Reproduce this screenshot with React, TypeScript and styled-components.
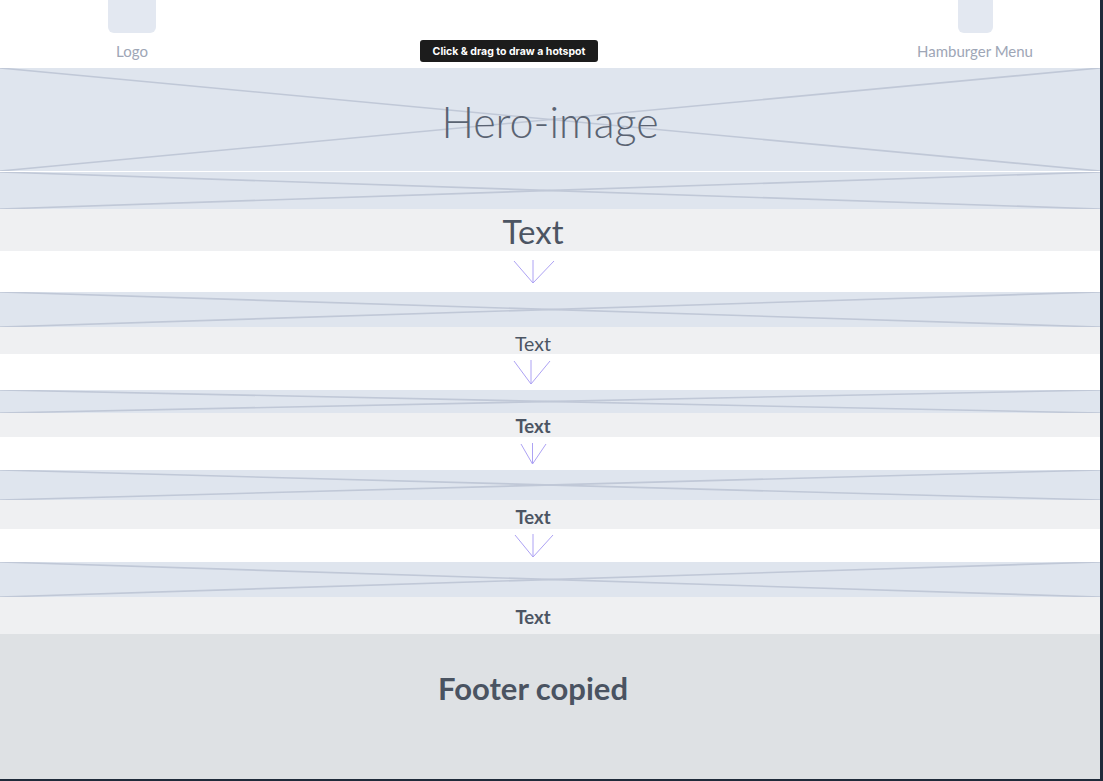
import styled, { createGlobalStyle } from "styled-components";

const GlobalStyle = createGlobalStyle`
  html, body {
    margin: 0;
    padding: 0;
    background: #ffffff;
  }
  body {
    font-family: Lato, "Open Sans", "Liberation Sans", sans-serif;
  }
`;

const Page = styled.div`
  position: relative;
  width: 1100px;
  height: 779px;
  border-right: 3px solid #1f2b3a;
  border-bottom: 2px solid #1f2b3a;
  background: #ffffff;
  display: flex;
  flex-direction: column;
  overflow: hidden;
`;

const Header = styled.header`
  height: 68px;
  display: flex;
  justify-content: space-between;
  padding: 0 55px 0 82px;
`;

const NavItem = styled.div<{ w: number }>`
  width: ${(p) => p.w}px;
  display: flex;
  flex-direction: column;
  align-items: center;
`;

const NavBox = styled.div<{ w: number }>`
  width: ${(p) => p.w}px;
  height: 33px;
  border-radius: 0 0 6px 6px;
  background: #e3e8f1;
`;

const NavLabel = styled.span`
  margin-top: 9px;
  font-size: 15px;
  color: #9ea6b6;
`;

const Tooltip = styled.div`
  position: absolute;
  left: 420px;
  top: 40px;
  width: 178px;
  height: 22px;
  border-radius: 3px;
  background: #1c1c1c;
  color: #ffffff;
  font-family: Inter, Roboto, "Liberation Sans", sans-serif;
  font-size: 10.5px;
  font-weight: 700;
  display: flex;
  align-items: center;
  justify-content: center;
`;

const Placeholder = styled.div<{ h: number; gapTop?: number }>`
  position: relative;
  height: ${(p) => p.h}px;
  margin-top: ${(p) => p.gapTop || 0}px;
  background: #dfe5ee;
  display: flex;
  align-items: center;
  justify-content: center;
  flex-shrink: 0;
`;

const Cross = styled.svg`
  position: absolute;
  inset: 0;
  width: 100%;
  height: 100%;
`;

const HeroTitle = styled.span`
  position: relative;
  font-size: 43px;
  font-weight: 300;
  color: #5a6372;
  margin-top: 3px;
`;

const TextBand = styled.div<{ h: number; size: number; bold?: boolean; shift?: number }>`
  height: ${(p) => p.h}px;
  background: #eff0f2;
  display: flex;
  align-items: center;
  justify-content: center;
  padding-right: 34px;
  padding-top: ${(p) => p.shift || 0}px;
  box-sizing: border-box;
  font-size: ${(p) => p.size}px;
  font-weight: ${(p) => (p.bold ? 700 : 400)};
  color: #4c5563;
  flex-shrink: 0;
`;

const ArrowRow = styled.div<{ h: number }>`
  height: ${(p) => p.h}px;
  display: flex;
  align-items: center;
  justify-content: center;
  padding-right: 34px;
  flex-shrink: 0;
`;

const Footer = styled.footer`
  flex: 1;
  background: #dee1e4;
  display: flex;
  justify-content: center;
  padding-top: 35px;
  padding-right: 34px;
  font-size: 31px;
  font-weight: 700;
  color: #4a5361;
`;

const CrossLines = () => (
  <Cross viewBox="0 0 100 100" preserveAspectRatio="none">
    <line x1="0" y1="0" x2="100" y2="100" stroke="#c0c8d7" strokeWidth="1.6" vectorEffect="non-scaling-stroke" />
    <line x1="0" y1="100" x2="100" y2="0" stroke="#c0c8d7" strokeWidth="1.6" vectorEffect="non-scaling-stroke" />
  </Cross>
);

const Arrow = ({ w, h, offset = 0 }: { w: number; h: number; offset?: number }) => (
  <svg width={w} height={h} viewBox={`0 0 ${w} ${h}`} style={{ marginLeft: offset }}>
    <g stroke="#ada2f4" strokeWidth="1" fill="none">
      <line x1={w / 2 - 1} y1="0" x2={w / 2 - 1} y2={h - 1} />
      <line x1="1" y1="1" x2={w / 2 - 1} y2={h - 1} />
      <line x1={w - 1} y1="1" x2={w / 2 - 1} y2={h - 1} />
    </g>
  </svg>
);

const sections = [
  { ph: 35, band: 27, size: 19.5, bold: false, shift: 5, arrow: { row: 36, w: 38, h: 25, off: -3 } },
  { ph: 23, band: 24, size: 18.5, bold: true, shift: 1, arrow: { row: 33, w: 27, h: 22, off: 1 } },
  { ph: 30, band: 29, size: 18.5, bold: true, shift: 4, arrow: { row: 33, w: 40, h: 24, off: 1 } },
  { ph: 35, band: 37, size: 18.5, bold: true, shift: 2, arrow: null },
];

export default function App() {
  return (
    <>
      <GlobalStyle />
      <Page>
        <Header>
          <NavItem w={100}>
            <NavBox w={48} />
            <NavLabel>Logo</NavLabel>
          </NavItem>
          <NavItem w={140}>
            <NavBox w={35} />
            <NavLabel>Hamburger Menu</NavLabel>
          </NavItem>
        </Header>
        <Tooltip>Click &amp; drag to draw a hotspot</Tooltip>

        <Placeholder h={103}>
          <CrossLines />
          <HeroTitle>Hero-image</HeroTitle>
        </Placeholder>
        <Placeholder h={37} gapTop={1}>
          <CrossLines />
        </Placeholder>
        <TextBand h={42} size={33} shift={2}>
          Text
        </TextBand>
        <ArrowRow h={41}>
          <Arrow w={42} h={24} offset={1} />
        </ArrowRow>

        {sections.map((s, i) => (
          <div key={i} style={{ display: "contents" }}>
            <Placeholder h={s.ph}>
              <CrossLines />
            </Placeholder>
            <TextBand h={s.band} size={s.size} bold={s.bold} shift={s.shift}>
              Text
            </TextBand>
            {s.arrow && (
              <ArrowRow h={s.arrow.row}>
                <Arrow w={s.arrow.w} h={s.arrow.h} offset={s.arrow.off} />
              </ArrowRow>
            )}
          </div>
        ))}

        <Footer>Footer copied</Footer>
      </Page>
    </>
  );
}
